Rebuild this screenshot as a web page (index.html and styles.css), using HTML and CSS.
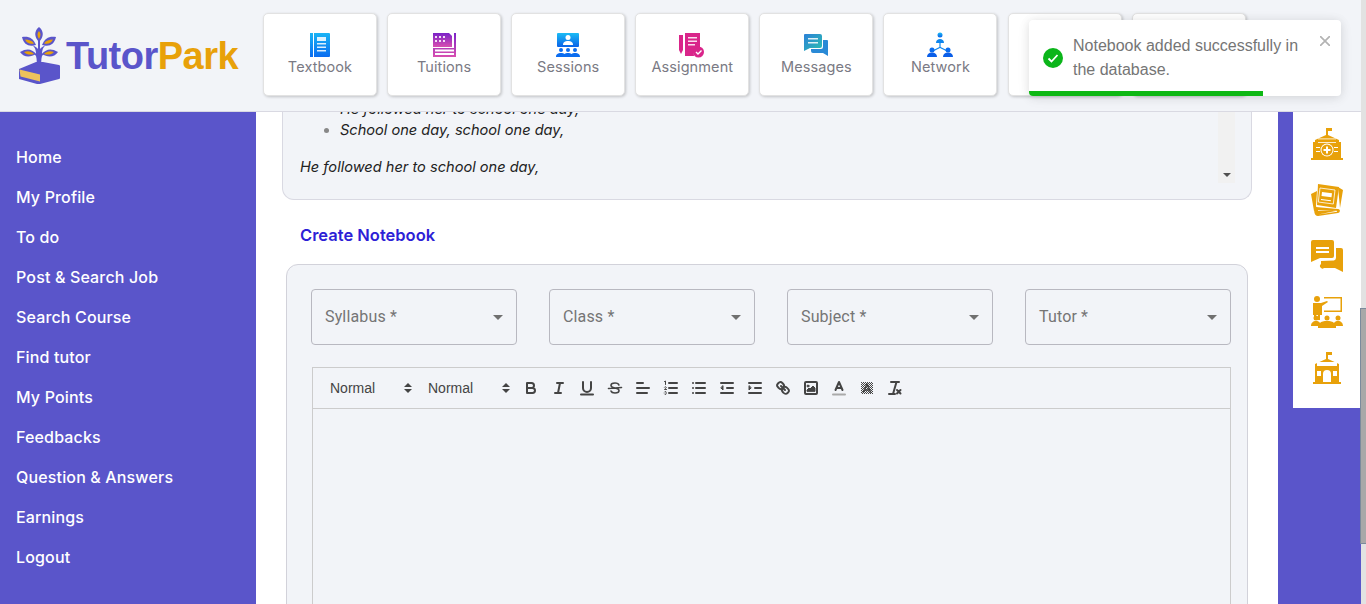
FILE: index.html
```html
<!DOCTYPE html>
<html lang="en">
<head>
  <meta charset="UTF-8" />
  <meta name="viewport" content="width=device-width, initial-scale=1.0" />
  <title>TutorPark</title>
  <link rel="stylesheet" href="styles.css">
</head>
<body>
  <div class="app">
    <header class="topbar">
      <a class="logo" href="#">
        <svg class="logo-mark" viewBox="0 0 44 58" width="44" height="58">
          <path d="M19 40c1-4 1-7 0-11-2-3-5-4-8-4 3-1 6 0 8 2 0-4-1-7-4-9 3 1 5 3 6 4V9h2v13c1-1 3-3 6-4-3 2-4 5-4 9 2-2 5-3 8-2-3 0-6 1-8 4-1 4-1 7 0 11z" fill="#5a55ca"/>
          <path d="M22 0c5 4 5 10 0 15-5-5-5-11 0-15z" fill="#5a55ca"/>
          <path d="M22 4c2 2 2 5 0 8-2-3-2-6 0-8z" fill="#e8a10a"/>
          <path d="M5 10c7-1 11 1 14 8-7 2-12 0-14-8z" fill="#5a55ca"/>
          <path d="M8 12.500c4 0 7 1 9 4-4 1-7 0-9-4z" fill="#e8a10a"/>
          <path d="M39 10c-7-1-11 1-14 8 7 2 12 0 14-8z" fill="#5a55ca"/>
          <path d="M36 12.500c-4 0-7 1-9 4 4 1 7 0 9-4z" fill="#e8a10a"/>
          <path d="M3 25c7-4 12-3 16 2-5 3-12 4-16-2z" fill="#5a55ca"/>
          <path d="M7 25c4-1.500 7-1 10 2-4 1-7 1-10-2z" fill="#e8a10a"/>
          <path d="M41 25c-7-4-12-3-16 2 5 3 12 4 16-2z" fill="#5a55ca"/>
          <path d="M37 25c-4-1.500-7-1-10 2 4 1 7 1 10-2z" fill="#e8a10a"/>
          <path d="M2 42l17-7h7l16 3c1 0 1 1 1 2v10c0 1 0 2-1 2l-19 5c-1 0-2 0-3 0L2 52z" fill="#5a55ca"/>
          <path d="M2.500 42.500l20.500 5v7L3.500 49.500z" fill="#eec25c"/>
        </svg>
        <span class="logo-text"><span class="logo-tutor">Tutor</span><span class="logo-park">Park</span></span>
      </a>
      <nav class="tiles">
        <a class="tile" href="#">
          <svg viewBox="0 0 26 26" width="26" height="26">
            <defs><linearGradient id="blueGrad" x1="0" y1="0" x2="0" y2="1"><stop offset="0" stop-color="#18b4f5"/><stop offset="1" stop-color="#0a6cf0"/></linearGradient></defs>
            <path d="M3 1h3v24H3zM7 1h15a1 1 0 0 1 1 1v22a1 1 0 0 1-1 1H7z" fill="url(#blueGrad)"/>
            <path d="M10 5h9v4h-9zM10 11h9v1.500h-9zM10 14.500h9V16h-9zM10 18h9v1.500h-9z" fill="#fff" opacity=".85"/>
          </svg>
          <span>Textbook</span>
        </a>
        <a class="tile" href="#">
          <svg viewBox="0 0 26 26" width="26" height="26">
            <defs><linearGradient id="purpleGrad" x1="0" y1="0" x2="0" y2="1"><stop offset="0" stop-color="#7a22c8"/><stop offset="1" stop-color="#d84fb0"/></linearGradient></defs>
            <path d="M2 1h16l3 3v11H2z" fill="url(#purpleGrad)"/>
            <path d="M23 1h2v24h-2zM2 16h21v1.500H4v2h19V21H4v2h19v2H2z" fill="url(#purpleGrad)"/>
            <path d="M4 4h2v2H4zM8 4h2v2H8zM12 4h2v2h-2zM4 8h2v2H4zM8 8h2v2H8zM12 8h2v2h-2z" fill="#fff" opacity=".85"/>
          </svg>
          <span>Tuitions</span>
        </a>
        <a class="tile" href="#">
          <svg viewBox="0 0 26 26" width="26" height="26">
            <defs><linearGradient id="skyGrad" x1="0" y1="0" x2="0" y2="1"><stop offset="0" stop-color="#1bbcf5"/><stop offset="1" stop-color="#0a62e8"/></linearGradient></defs>
            <rect x="2" y="1" width="22" height="14" rx="1" fill="url(#skyGrad)"/>
            <circle cx="13" cy="5.500" r="2.500" fill="#fff"/>
            <path d="M8 13c0-3 2-4 5-4s5 1 5 4z" fill="#fff"/>
            <g fill="#0a6cf0"><circle cx="6" cy="18" r="2"/><circle cx="13" cy="18" r="2"/><circle cx="20" cy="18" r="2"/><path d="M1 25c0-3 2-4 5-4 1.500 0 2.500.3 3.500 1 1-.7 2-1 3.500-1s2.500.3 3.500 1c1-.7 2-1 3.500-1 3 0 5 1 5 4z"/></g>
          </svg>
          <span>Sessions</span>
        </a>
        <a class="tile" href="#">
          <svg viewBox="0 0 26 26" width="26" height="26">
            <path d="M6 1h15v14a7 7 0 0 0-6 9H6z" fill="#d9258a"/>
            <path d="M9 5h9v1.500H9zM9 8.500h9V10H9zM9 12h7v1.500H9z" fill="#fff" opacity=".85"/>
            <path d="M0 3h4v15l-2 4-2-4z" fill="#d9258a"/>
            <circle cx="19.500" cy="20" r="5.500" fill="#d9258a"/>
            <path d="M17 20l2 2 3.500-3.500" fill="none" stroke="#fff" stroke-width="1.400"/>
          </svg>
          <span>Assignment</span>
        </a>
        <a class="tile" href="#">
          <svg viewBox="0 0 26 26" width="26" height="26">
            <defs><linearGradient id="chatGrad" x1="0" y1="0" x2="1" y2="1"><stop offset="0" stop-color="#2b80d8"/><stop offset="1" stop-color="#2cc0b0"/></linearGradient></defs>
            <path d="M2 2h15a2 2 0 0 1 2 2v10a2 2 0 0 1-2 2H7l-6 3V3a1 1 0 0 1 1-1z" fill="url(#chatGrad)"/>
            <path d="M20 8h4a1 1 0 0 1 1 1v15l-5-3H10a2 2 0 0 1-2-2v-2h10a2 2 0 0 0 2-2z" fill="#2a8ad6"/>
            <path d="M5 6h10v1.500H5zM5 10h10v1.500H5z" fill="#fff" opacity=".85"/>
          </svg>
          <span>Messages</span>
        </a>
        <a class="tile" href="#">
          <svg viewBox="0 0 26 26" width="26" height="26">
            <defs><linearGradient id="netGrad" x1="0" y1="0" x2="0" y2="1"><stop offset="0" stop-color="#1bbcf5"/><stop offset="1" stop-color="#0a5ee8"/></linearGradient></defs>
            <circle cx="13" cy="3" r="2.500" fill="url(#netGrad)"/>
            <path d="M9 11c0-3 2-4 4-4s4 1 4 4zM12.400 11h1.200v4l6 3-.6 1-6-3-6 3-.6-1 6-3z" fill="#0e86ee"/>
            <circle cx="5" cy="18" r="2.500" fill="#0a6cf0"/><circle cx="21" cy="18" r="2.500" fill="#0a6cf0"/>
            <path d="M0 25c0-3 2-4.500 5-4.500S10 22 10 25zM16 25c0-3 2-4.500 5-4.500s5 1.500 5 4.500z" fill="#0a5ee8"/>
          </svg>
          <span>Network</span>
        </a>
        <a class="tile" href="#"></a>
        <a class="tile" href="#"></a>
      </nav>
    </header>

    <div class="layout">
      <aside class="sidebar">
        <a href="#">Home</a>
        <a href="#">My Profile</a>
        <a href="#">To do</a>
        <a href="#">Post &amp; Search Job</a>
        <a href="#">Search Course</a>
        <a href="#">Find tutor</a>
        <a href="#">My Points</a>
        <a href="#">Feedbacks</a>
        <a href="#">Question &amp; Answers</a>
        <a href="#">Earnings</a>
        <a href="#">Logout</a>
      </aside>

      <main class="content">
        <section class="notes">
          <div class="notes-text">
            <ul>
              <li>He followed her to school one day,</li>
              <li>School one day, school one day,</li>
            </ul>
            <p>He followed her to school one day,</p>
          </div>
          <div class="notes-scroll"><span class="scroll-arrow"></span></div>
        </section>

        <h2 class="create-title">Create Notebook</h2>

        <form class="notebook-form">
          <div class="select-row">
            <div class="select-box">Syllabus *<span class="caret"></span></div>
            <div class="select-box">Class *<span class="caret"></span></div>
            <div class="select-box">Subject *<span class="caret"></span></div>
            <div class="select-box">Tutor *<span class="caret"></span></div>
          </div>

          <div class="editor">
            <div class="toolbar">
              <span class="picker">Normal<svg viewBox="0 0 18 18"><polygon points="5 10 9 14 13 10"/><polygon points="5 8 9 4 13 8"/></svg></span>
              <span class="picker">Normal<svg viewBox="0 0 18 18"><polygon points="5 10 9 14 13 10"/><polygon points="5 8 9 4 13 8"/></svg></span>
              <svg class="tool" viewBox="0 0 18 18"><path d="M5 4h4.500a2.500 2.500 0 0 1 0 5H5zM5 9h5.500a2.500 2.500 0 0 1 0 5H5z"/></svg>
              <svg class="tool" viewBox="0 0 18 18"><path d="M7 4h6M5 14h6M8 14l2-10"/></svg>
              <svg class="tool" viewBox="0 0 18 18"><path d="M5 3v6a4 4 0 0 0 4 4 4 4 0 0 0 4-4V3M3 15.500h12"/></svg>
              <svg class="tool" viewBox="0 0 18 18"><path class="mid" d="M15.500 8.500l-13 1M12.900 6C12.500 4.500 11 4 9 4 6.800 4 5 5 5 6.500c0 1.500 1.500 2 4 2.500 2.500.5 4 1 4 2.500C13 13 11.200 14 9 14c-2 0-3.500-.6-4-2"/></svg>
              <svg class="tool" viewBox="0 0 18 18"><path d="M3 9h12M3 14h10M3 4h6"/></svg>
              <svg class="tool" viewBox="0 0 18 18"><path d="M7 4h8M7 9h8M7 14h8"/><path class="thin" d="M2.500 2.500l1-.5v3.500M2.500 8.200a1 1 0 0 1 1.800.3c0 .9-1.800 1.300-1.800 2h2M2.500 13a1 1 0 0 1 1.800.2c0 .4-.2.700-.6.800.4.100.6.400.6.800a1 1 0 0 1-1.800.2"/></svg>
              <svg class="tool" viewBox="0 0 18 18"><path d="M6 4h9M6 9h9M6 14h9M3 4h.01M3 9h.01M3 14h.01"/></svg>
              <svg class="tool" viewBox="0 0 18 18"><path d="M3 14h12M3 4h12M9 9h6"/><polygon class="solid" points="5 7 5 11 3 9"/></svg>
              <svg class="tool" viewBox="0 0 18 18"><path d="M3 14h12M3 4h12M9 9h6"/><polygon class="solid" points="3 7 3 11 5 9"/></svg>
              <svg class="tool" viewBox="0 0 18 18"><path d="M7 7l4 4M8.900 4.600a3.500 3.500 0 0 1 .4 4.700 3.500 3.500 0 0 1-4.700-.4c-1.400-1.400-2.600-2.500-.4-4.700s3.300-1 4.700.4zM13.400 9.100a3.500 3.500 0 0 0-4.700-.4 3.500 3.500 0 0 0 .4 4.700c1.400 1.400 2.500 2.500 4.700.4s1-3.300-.4-4.700z"/></svg>
              <svg class="tool" viewBox="0 0 18 18"><rect x="3" y="3" width="12" height="12" rx="1"/><circle class="solid" cx="6" cy="7" r="1"/><polygon class="solid" points="5 12 5 11 7 9 8 10 11 7 13 9 13 12"/></svg>
              <svg class="tool" viewBox="0 0 18 18"><path class="label-line" d="M3 15.500h12"/><path d="M5.500 11L9 3l3.500 8M11.600 9H6.400"/></svg>
              <svg class="tool" viewBox="0 0 18 18"><defs><pattern id="hatch" width="2" height="2" patternUnits="userSpaceOnUse"><rect width="1" height="1" fill="#444" stroke="none"/><rect x="1" y="1" width="1" height="1" fill="#444" stroke="none"/></pattern></defs><rect x="3" y="3" width="12" height="12" fill="url(#hatch)" stroke="none"/><path class="mid" d="M5.500 13L9 5l3.500 8M11.600 11H6.400"/></svg>
              <svg class="tool" viewBox="0 0 18 18"><path d="M5 3h8M3 15h6M10.500 3L7 15M11 11l3.500 3.500M14.500 11L11 14.500"/></svg>
            </div>
            <div class="editor-body"></div>
          </div>
        </form>
      </main>

      <div class="strip"></div>

      <aside class="quick">
        <div class="quick-icons">
          <svg viewBox="0 0 32 32" width="32" height="32">
            <path d="M16 0h5v3h-4v4l11 5v2h2v16H2V14h2v-2l11-5V0z"/>
            <rect class="cut" x="7" y="10.500" width="18" height=".8"/>
            <rect class="cut" x="7" y="14" width="18" height=".8"/>
            <circle cx="16" cy="22" r="6.500" fill="#fff"/><circle cx="16" cy="22" r="5.500"/>
            <path class="cut" d="M15 18.500h2V21h2.500v2H17v2.500h-2V23h-2.500v-2H15z"/>
            <path class="cut" d="M5 19h4v1H5zM5 23h4v1H5zM23 19h4v1h-4zM23 23h4v1h-4z"/>
            <path d="M0 30h32v2H0z"/>
          </svg>
          <svg viewBox="0 0 32 32" width="32" height="32">
            <path d="M0 10l6-3-1 15 1 4-3 1zM27 3l5 3-3 18z"/>
            <path d="M7 0l21 3-3 21-19-3z"/>
            <path d="M9 4l15 2-1.700 14-15-2z" fill="none" stroke="#fff" stroke-width=".8"/>
            <path class="cut" d="M11 8l10 1.300-.5 4-10-1.300zM10 15l10 1.300-.1 1-10-1.300z"/>
            <path d="M5 23l22 2c3 0 2 4 0 4L7 32c-4 0-5-7-2-9z"/>
            <path class="cut" d="M7 26l19 1v.8L7 30.500l19-3.700-19-.1z"/>
          </svg>
          <svg viewBox="0 0 32 32" width="32" height="32">
            <path d="M2 0h19a2 2 0 0 1 2 2v14a2 2 0 0 1-2 2H9l-9 4V2a2 2 0 0 1 2-2z"/>
            <path d="M25 8h5a2 2 0 0 1 2 2v22l-8-4H13a2 2 0 0 1-3-4v-3l13-.5a3 3 0 0 0 2-3z"/>
            <path class="cut" d="M5 7h13v2H5zM5 11h13v2H5z"/>
          </svg>
          <svg viewBox="0 0 32 32" width="32" height="32">
            <circle cx="6" cy="3" r="3"/>
            <path d="M2 7h8l6-2 1 1-6 4v9H9v5H7v-5H5v5H3v-5H2z"/>
            <path d="M13 1h18v15H13v-1.500h16.500v-12H13z"/>
            <circle cx="5" cy="22" r="2.500"/><circle cx="16" cy="22" r="2.500"/><circle cx="27" cy="22" r="2.500"/>
            <path d="M0 30c0-3 2-5 5-5 2 0 3 .5 4 2 1-1.500 4-2 7-2s6 .5 7 2c1-1.500 2-2 4-2 3 0 5 2 5 5H25v2H7v-2z"/>
          </svg>
          <svg viewBox="0 0 32 32" width="32" height="32">
            <path d="M16 0h5v3h-4v4l11 5v18H4V12l11-5V0z"/>
            <rect class="cut" x="6" y="10" width="20" height="4"/>
            <path class="cut" d="M12 30v-8a4 4 0 0 1 8 0v8z"/>
            <path class="cut" d="M6 19h4v5H6zM22 19h4v5h-4z"/>
            <path d="M2 30h28v2H2z"/>
          </svg>
        </div>
      </aside>
    </div>

    <div class="toast">
      <span class="toast-icon">
        <svg viewBox="0 0 20 20" width="20" height="20"><circle cx="10" cy="10" r="10" fill="#0bb51a"/><path d="M5.500 10.500l3 3 6-6.500" fill="none" stroke="#fff" stroke-width="1.800"/></svg>
      </span>
      <p class="toast-text">Notebook added successfully in the database.</p>
      <svg class="toast-close" viewBox="0 0 10 10" width="10" height="10"><path d="M0 0l10 10M10 0L0 10" stroke="#b3b3b3" stroke-width="1.700"/></svg>
      <div class="toast-bar"></div>
    </div>
  </div>

  <div class="page-scrollbar"><div class="page-thumb"></div></div>
</body>
</html>
```

FILE: styles.css
```css
* {
  box-sizing: border-box;
}
html, body {
  height: 100%;
}
body {
  margin: 0;
  display: flex;
  overflow: hidden;
  font-family: Inter, "Open Sans", sans-serif;
  background-color: #fff;
}
a {
  text-decoration: none;
}

.app {
  position: relative;
  flex: 1;
  min-width: 0;
  display: flex;
  flex-direction: column;
}

/* top bar */
.topbar {
  flex: none;
  height: 112px;
  display: flex;
  background-color: #f2f4f8;
  border-bottom: 1px solid #d9d9e2;
  position: relative;
  z-index: 2;
}
.logo {
  flex: none;
  width: 263px;
  padding-left: 17px;
  display: flex;
  align-items: center;
  gap: 5px;
}
.logo-mark {
  flex: none;
}
.logo-text {
  padding-top: 1px;
  font-family: "Liberation Sans", sans-serif;
  font-size: 38px;
  font-weight: bold;
  letter-spacing: -0.5px;
}
.logo-tutor {
  color: #5a55ca;
}
.logo-park {
  color: #e8a10a;
}
.tiles {
  display: flex;
  gap: 10.1px;
  padding-top: 13px;
}
.tile {
  width: 114px;
  height: 83px;
  padding-top: 18px;
  display: flex;
  flex-direction: column;
  align-items: center;
  background-color: #fff;
  border: 1px solid #e2e2e2;
  border-radius: 5px;
  box-shadow: 1px 1px 3px rgba(0, 0, 0, 0.2);
  color: #7a7a84;
  font-size: 14.5px;
  letter-spacing: 0.1px;
  line-height: 18px;
}

/* main layout */
.layout {
  flex: 1;
  min-height: 0;
  display: flex;
}
.sidebar {
  flex: none;
  width: 256px;
  padding: 25px 16px 0;
  display: flex;
  flex-direction: column;
  background-color: #5a55ca;
}
.sidebar a {
  height: 40px;
  line-height: 40px;
  color: #fff;
  font-size: 16px;
  font-weight: 500;
  letter-spacing: 0.15px;
}
.content {
  flex: 1;
  min-width: 0;
  overflow: hidden;
  padding-left: 26px;
  padding-right: 26px;
}
.strip {
  flex: none;
  width: 15px;
  background-color: #5a55ca;
}
.quick {
  flex: none;
  width: 68px;
  background-color: #5a55ca;
}
.quick-icons {
  padding: 16px 0 24px;
  display: flex;
  flex-direction: column;
  align-items: center;
  gap: 24px;
  background-color: #fff;
}
.quick-icons svg {
  display: block;
  fill: #e8a10a;
}
.quick-icons .cut {
  fill: #fff;
}

/* notes panel */
.notes {
  height: 88px;
  width: 970px;
  display: flex;
  justify-content: space-between;
  overflow: hidden;
  background-color: #f2f4f8;
  border: 1px solid #d9d9e2;
  border-top: none;
  border-radius: 0 0 12px 12px;
}
.notes-text {
  flex: 1;
  height: 66px;
  padding-left: 17px;
  display: flex;
  flex-direction: column;
  justify-content: flex-end;
  font-size: 14.6px;
  font-style: italic;
  line-height: 21px;
  color: #222;
}
.notes-text ul {
  margin: 0 0 16px;
  padding-left: 40px;
}
.notes-text li::marker {
  color: #888;
}
.notes-text p {
  margin: 0;
}
.notes-scroll {
  flex: none;
  position: relative;
  width: 17px;
  height: 71px;
  margin-right: 16px;
  background-color: #f1f1f1;
}
.scroll-arrow {
  position: absolute;
  left: 5px;
  bottom: 6px;
  border: 4px solid transparent;
  border-top: 4px solid #505050;
  border-bottom: none;
}
.create-title {
  margin: 23px 0 17px 18px;
  font-size: 16.5px;
  line-height: 24px;
  font-weight: 600;
  color: #2d1fd6;
}

/* form */
.notebook-form {
  width: 962px;
  margin-left: 4px;
  padding: 24px 16px 24px 24px;
  background-color: #f2f4f8;
  border: 1px solid #d2d2da;
  border-radius: 12px;
}
.select-row {
  display: grid;
  grid-template-columns: repeat(4, 1fr);
  gap: 32px;
}
.select-box {
  position: relative;
  height: 56px;
  padding: 0 0 2px 13px;
  display: flex;
  align-items: center;
  border: 1px solid #b8b8c0;
  border-radius: 4px;
  font-family: Roboto, sans-serif;
  font-size: 16px;
  letter-spacing: 0.15px;
  color: #757575;
}
.caret {
  position: absolute;
  right: 13px;
  top: 25px;
  border: 5px solid transparent;
  border-top: 5px solid #707070;
  border-bottom: none;
}
.editor {
  margin-top: 22px;
  margin-left: 1px;
  border: 1px solid #ccc;
}
.toolbar {
  height: 41px;
  padding-left: 8px;
  display: flex;
  align-items: center;
  border-bottom: 1px solid #ccc;
}
.picker {
  width: 98px;
  padding-left: 9px;
  display: flex;
  align-items: center;
  justify-content: space-between;
  font-family: "Liberation Sans", sans-serif;
  font-size: 14px;
  color: #444;
}
.picker svg {
  width: 18px;
  height: 18px;
  margin-right: 2px;
  fill: #444;
}
.tool {
  flex: none;
  width: 18px;
  height: 18px;
  margin: 0 5px;
  fill: none;
  stroke: #444;
  stroke-width: 2;
  stroke-linecap: round;
  stroke-linejoin: round;
}
.tool .thin {
  stroke-width: 1;
}
.tool .mid {
  stroke-width: 1.6;
}
.tool .solid {
  fill: #444;
  stroke: #444;
  stroke-width: 1;
}
.tool .label-line {
  stroke: #aaa;
}
.editor-body {
  height: 320px;
}

/* toast */
.toast {
  position: absolute;
  left: 1029px;
  top: 20px;
  z-index: 5;
  width: 312px;
  height: 76px;
  overflow: hidden;
  background-color: #fff;
  border-radius: 4px;
  box-shadow: 0 1px 10px rgba(0, 0, 0, 0.1), 0 2px 15px rgba(0, 0, 0, 0.05);
  display: flex;
  align-items: flex-start;
}
.toast-icon {
  flex: none;
  margin: 28px 0 0 14px;
  height: 20px;
}
.toast-text {
  flex: none;
  width: 240px;
  margin: 14px 0 0 10px;
  font-family: "Liberation Sans", sans-serif;
  font-size: 16px;
  line-height: 24px;
  color: #757575;
}
.toast-close {
  position: absolute;
  right: 11px;
  top: 16px;
}
.toast-bar {
  position: absolute;
  left: 0;
  bottom: 0;
  width: 75%;
  height: 5px;
  background-color: #0eb814;
}

/* page scrollbar */
.page-scrollbar {
  flex: none;
  position: relative;
  width: 5px;
  background-color: #e2e2e2;
}
.page-thumb {
  position: absolute;
  top: 308px;
  left: -1px;
  right: 0;
  height: 236px;
  background-color: #a8a8a8;
  border: 1px solid #7b8a9c;
  border-right: none;
}
```
